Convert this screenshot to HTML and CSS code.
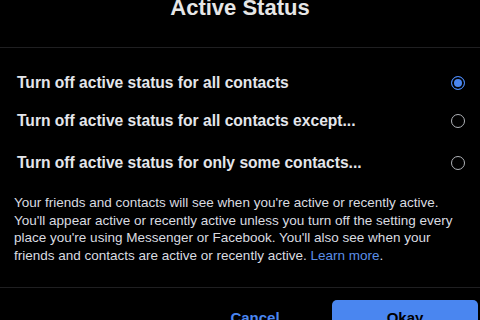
FILE: index.html
```html
<!DOCTYPE html>
<html lang="en">
<head>
    <meta charset="UTF-8">
    <title>Active Status</title>
    <link rel="stylesheet" href="styles.css">
</head>
<body>
    <div class="dialog">
        <div class="header">
            <h1 class="title">Active Status</h1>
        </div>
        <div class="options">
            <label class="option">
                <span>Turn off active status for all contacts</span>
                <span class="radio checked"></span>
            </label>
            <label class="option">
                <span>Turn off active status for all contacts except...</span>
                <span class="radio"></span>
            </label>
            <label class="option last">
                <span>Turn off active status for only some contacts...</span>
                <span class="radio"></span>
            </label>
        </div>
        <p class="info">
            Your friends and contacts will see when you're active or recently active.<br>
            You'll appear active or recently active unless you turn off the setting every<br>
            place you're using Messenger or Facebook. You'll also see when your<br>
            friends and contacts are active or recently active. <a href="#">Learn more</a>.
        </p>
        <div class="footer">
            <button class="cancel">Cancel</button>
            <button class="okay">Okay</button>
        </div>
    </div>
</body>
</html>
```

FILE: styles.css
```css
html, body {
    margin: 0;
    background-color: #000;
    overflow: hidden;
}

.dialog {
    width: 480px;
    height: 320px;
    display: flex;
    flex-direction: column;
    font-family: "Liberation Sans", Arial, sans-serif;
    color: #e4e6eb;
}

.header {
    height: 47px;
    border-bottom: 1px solid #1f1f21;
    display: flex;
    justify-content: center;
}

.title {
    margin: -4px 0 0 0;
    font-size: 22px;
    line-height: 24px;
    font-weight: bold;
    color: #e6e6e6;
}

.options {
    padding: 16px 16px 0 17px;
}

.option {
    display: flex;
    justify-content: space-between;
    align-items: center;
    height: 38px;
    font-size: 15.6px;
    font-weight: bold;
    color: #e4e6eb;
}

.option.last {
    margin-top: 4px;
}

.radio {
    width: 12px;
    height: 12px;
    border: 1.5px solid #b0b3b8;
    border-radius: 50%;
    margin-right: -1px;
}

.radio.checked {
    border-color: #4a86f0;
    background-color: #4a86f0;
    box-shadow: inset 0 0 0 2px #000;
}

.info {
    margin: 12px 0 0 14px;
    font-size: 13.5px;
    line-height: 17.7px;
    color: #dadce0;
    white-space: nowrap;
}

.info a {
    color: #5b8fe8;
    text-decoration: none;
}

.footer {
    margin-top: auto;
    height: 33px;
    border-top: 1px solid #1f1f21;
    display: flex;
    justify-content: flex-end;
    align-items: flex-start;
    padding-top: 12px;
    box-sizing: border-box;
}

.footer button {
    font-family: inherit;
    font-size: 15px;
    font-weight: bold;
    border: none;
    border-radius: 5px;
    height: 34px;
    cursor: pointer;
}

.cancel {
    background: none;
    color: #4a86f0;
    width: 80px;
    margin-right: 37px;
}

.okay {
    background-color: #4a86f0;
    color: #000;
    width: 146px;
    margin-right: 2px;
}
```
